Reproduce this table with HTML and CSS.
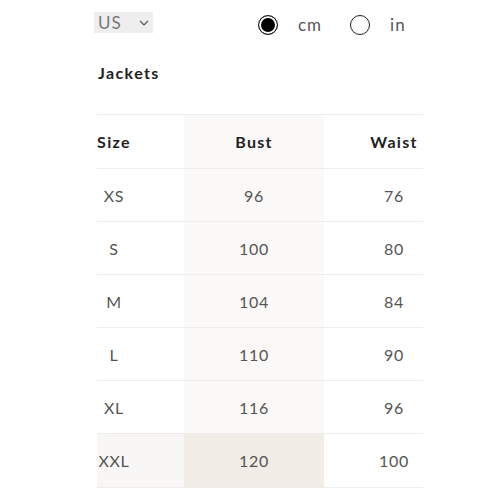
FILE: index.html
```html
<!DOCTYPE html>
<html>
<head>
<meta charset="utf-8">
<link rel="stylesheet" href="styles.css">
</head>
<body>
<div class="page">
  <div class="content">
    <div class="controls">
      <div class="select">
        <span class="select-val">US</span>
        <svg class="chev" width="10" height="6" viewBox="0 0 10 6"><path d="M1 1 L5 5 L9 1" fill="none" stroke="#555" stroke-width="1.2"/></svg>
      </div>
      <div class="units">
        <label class="unit"><span class="radio checked"></span><span class="unit-text">cm</span></label>
        <label class="unit"><span class="radio"></span><span class="unit-text">in</span></label>
      </div>
    </div>
    <h2 class="title">Jackets</h2>
    <div class="table-wrap">
      <table class="sizes">
        <thead>
          <tr><th class="c-size">Size</th><th class="c-bust">Bust</th><th class="c-waist">Waist</th></tr>
        </thead>
        <tbody>
          <tr><td class="c-size">XS</td><td class="c-bust">96</td><td class="c-waist">76</td></tr>
          <tr><td class="c-size">S</td><td class="c-bust">100</td><td class="c-waist">80</td></tr>
          <tr><td class="c-size">M</td><td class="c-bust">104</td><td class="c-waist">84</td></tr>
          <tr><td class="c-size">L</td><td class="c-bust">110</td><td class="c-waist">90</td></tr>
          <tr><td class="c-size">XL</td><td class="c-bust">116</td><td class="c-waist">96</td></tr>
          <tr class="hl"><td class="c-size">XXL</td><td class="c-bust">120</td><td class="c-waist">100</td></tr>
        </tbody>
      </table>
    </div>
  </div>
</div>
</body>
</html>
```

FILE: styles.css
```css
html, body { margin: 0; padding: 0; background: #fff; }
body { font-family: "Lato", "Open Sans", sans-serif; color: #222; }

.page {
  width: 440px;
  height: 500px;
  overflow-y: scroll;
}
.page::-webkit-scrollbar { width: 7px; }
.page::-webkit-scrollbar-track { background: #f1f1f1; }
.page::-webkit-scrollbar-thumb { background: #a9a9a9; }

.content {
  min-height: 990px;
  padding: 12px 0 0 94px;
  box-sizing: border-box;
}

.controls {
  display: flex;
  align-items: flex-start;
  height: 21px;
}
.select {
  width: 59px;
  height: 21px;
  background: #eeeeee;
  display: flex;
  align-items: center;
  justify-content: space-between;
  padding: 0 4px 0 4px;
  box-sizing: border-box;
}
.select-val { font-size: 17px; color: #777; letter-spacing: 1px; line-height: 21px; }
.chev { margin-top: 1px; }

.units { display: flex; align-items: center; margin: 3px 0 0 105px; height: 20px; }
.unit { display: flex; align-items: center; }
.unit + .unit { margin-left: 28px; }
.radio {
  width: 20px; height: 20px;
  border: 1.6px solid #222;
  border-radius: 50%;
  box-sizing: border-box;
  display: inline-block;
}
.radio.checked {
  background: #000;
  box-shadow: inset 0 0 0 2px #fff;
}
.unit-text { margin-left: 20px; font-size: 17px; color: #555; letter-spacing: 1px; line-height: 20px; }

.title {
  margin: 30px 0 0 4px;
  font-size: 16px;
  font-weight: 700;
  color: #222;
  letter-spacing: 1.4px;
  line-height: 20px;
}

.table-wrap {
  margin: 31px 0 0 3px;
  width: 326px;
  overflow: hidden;
}
.sizes {
  margin-left: -53px;
  border-collapse: collapse;
  table-layout: fixed;
  width: 420px;
}
.sizes th, .sizes td {
  width: 140px;
  padding: 0;
  text-align: center;
  border-top: 1px solid #ededed;
  border-bottom: 1px solid #ededed;
  font-size: 16px;
}
.sizes th { height: 53px; font-weight: 700; color: #222; letter-spacing: 1.3px; }
.sizes td { height: 52px; color: #555; letter-spacing: 0.7px; }
.sizes tr.hl td { height: 53px; }
.sizes .c-bust { background: #faf9f7; }
.sizes tr.hl .c-size { background: #f9f7f5; }
.sizes tr.hl .c-bust { background: #f1ece6; }
```
